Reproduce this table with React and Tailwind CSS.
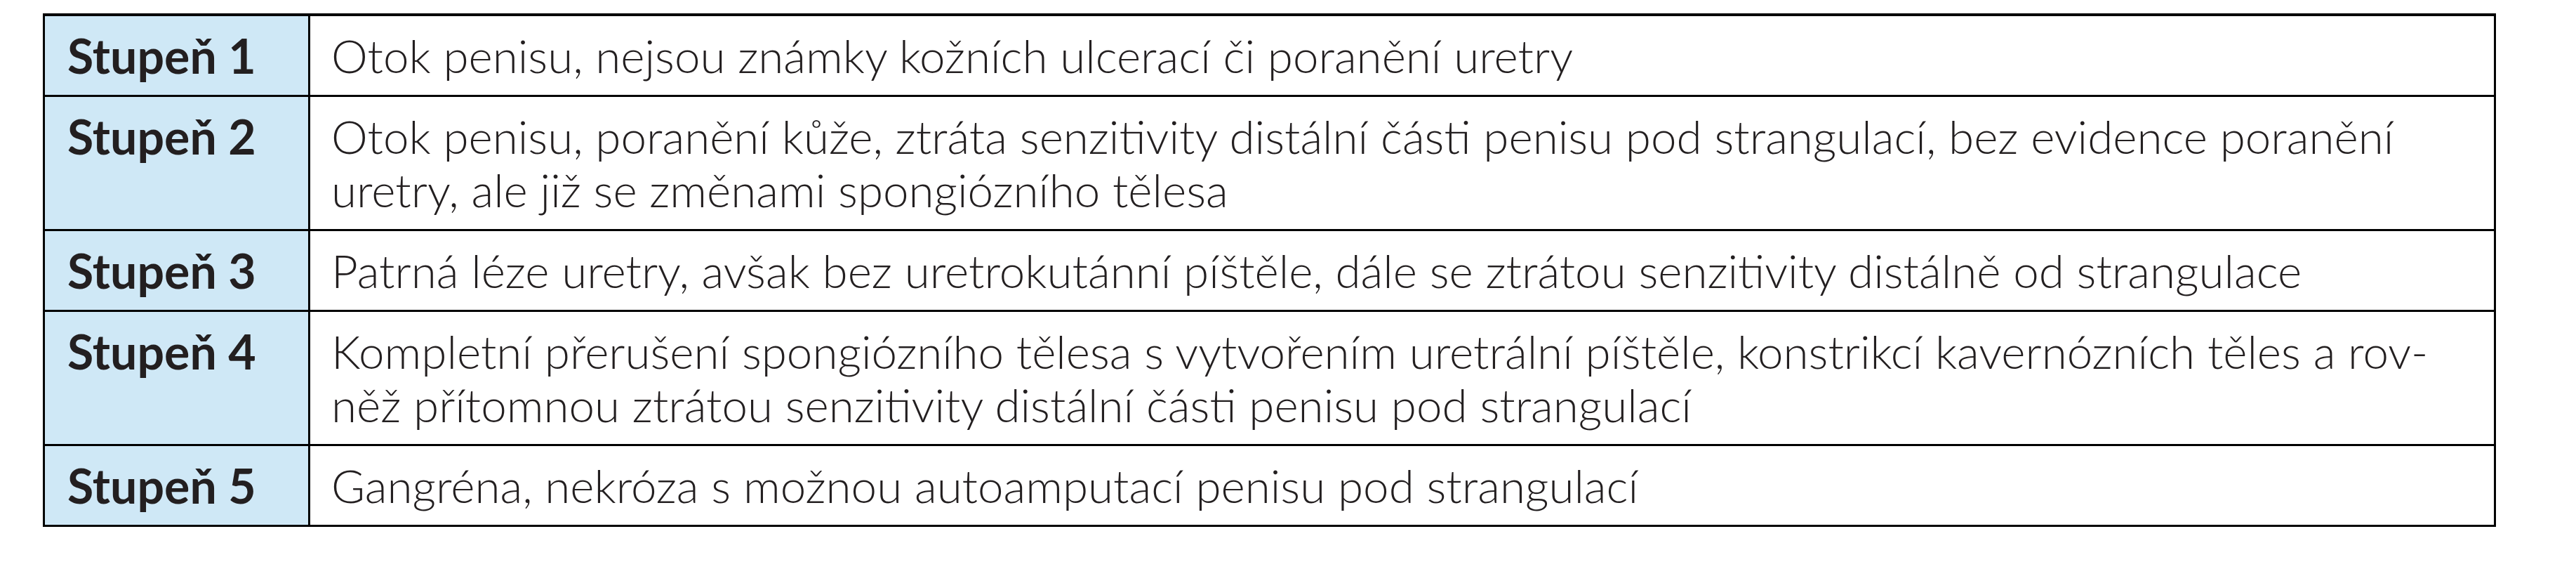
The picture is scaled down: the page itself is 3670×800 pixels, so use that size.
import React from 'react'

const ROWS = [
  {
    grade: 'Stupeň 1',
    lines: ['Otok penisu, nejsou známky kožních ulcerací či poranění uretry'],
  },
  {
    grade: 'Stupeň 2',
    lines: [
      'Otok penisu, poranění kůže, ztráta senzitivity distální části penisu pod strangulací, bez evidence poranění',
      'uretry, ale již se změnami spongiózního tělesa',
    ],
  },
  {
    grade: 'Stupeň 3',
    lines: ['Patrná léze uretry, avšak bez uretrokutánní píštěle, dále se ztrátou senzitivity distálně od strangulace'],
  },
  {
    grade: 'Stupeň 4',
    lines: [
      'Kompletní přerušení spongiózního tělesa s vytvořením uretrální píštěle, konstrikcí kavernózních těles a rov-',
      'něž přítomnou ztrátou senzitivity distální části penisu pod strangulací',
    ],
  },
  {
    grade: 'Stupeň 5',
    lines: ['Gangréna, nekróza s možnou autoamputací penisu pod strangulací'],
  },
]

export default function App() {
  return (
    <div className="w-[3670px] h-[800px] bg-white pt-[19px] pl-[61px]">
      <div
        className="w-[3495px] border-[3px] border-t-4 border-black text-[#231f20]"
        style={{ fontFamily: 'Lato, "Open Sans", sans-serif' }}
      >
        {ROWS.map((row, i) => (
          <div
            key={row.grade}
            className={
              'grid grid-cols-[378px_1fr] ' + (i < ROWS.length - 1 ? 'border-b-[3px] border-black' : '')
            }
          >
            <div className="bg-[#cfe8f6] border-r-[3px] border-black pl-[32px] py-[18px] text-[68px] leading-[76px] font-bold whitespace-nowrap">
              {row.grade}
            </div>
            <div className="pl-[30px] py-[18px] text-[65.5px] leading-[76px] font-light whitespace-nowrap">
              {row.lines.map(l => (
                <div key={l}>{l}</div>
              ))}
            </div>
          </div>
        ))}
      </div>
    </div>
  )
}
